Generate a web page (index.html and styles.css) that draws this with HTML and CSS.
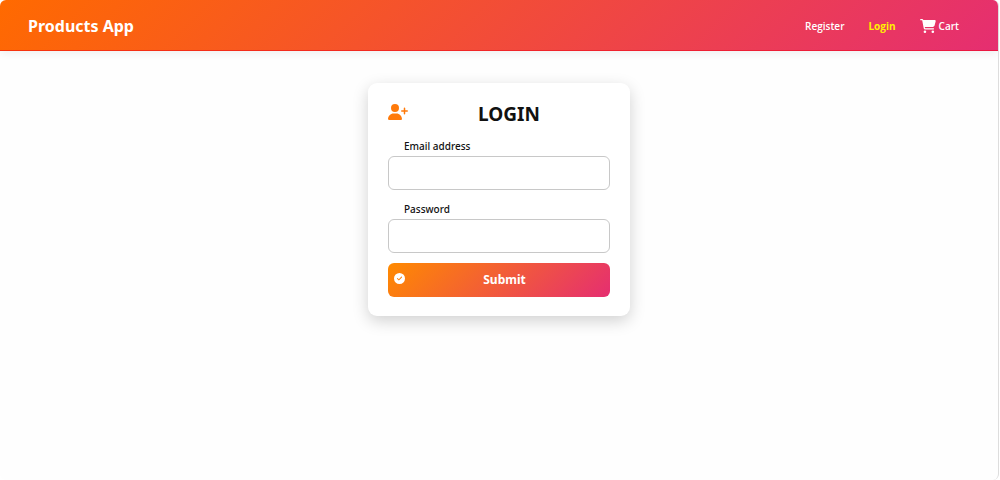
FILE: index.html
```html
<!DOCTYPE html>
<html lang="en">
<head>
<meta charset="utf-8">
<title>Products App</title>
<link rel="stylesheet" href="styles.css">
</head>
<body>
<div class="app">
  <header class="navbar">
    <a class="brand" href="#">Products App</a>
    <nav class="links">
      <a class="link" href="#">Register</a>
      <a class="link active" href="#">Login</a>
      <a class="link cart" href="#">
        <svg class="cart-icon" viewBox="0 0 576 512" aria-hidden="true"><path fill="currentColor" d="M0 24C0 10.700 10.700 0 24 0H69.500c22 0 41.500 12.800 50.600 32h411c26.300 0 45.500 25 38.600 50.400l-41 152.300c-8.500 31.400-37 53.300-69.500 53.300H170.700l5.400 28.500c2.200 11.300 12.100 19.500 23.600 19.500H488c13.300 0 24 10.700 24 24s-10.700 24-24 24H199.700c-34.600 0-64.300-24.600-70.700-58.500L77.400 54.500C76.700 50.700 73.400 48 69.500 48H24C10.700 48 0 37.300 0 24zM128 464a48 48 0 1 1 96 0 48 48 0 1 1-96 0zm336-48a48 48 0 1 1 0 96 48 48 0 1 1 0-96z"/></svg>
        Cart
      </a>
    </nav>
  </header>
  <main class="content">
    <form class="card">
      <div class="card-head">
        <svg class="user-icon" viewBox="0 0 640 512" aria-hidden="true"><path fill="currentColor" d="M96 128a128 128 0 1 1 256 0A128 128 0 1 1 96 128zM0 482.300C0 383.800 79.800 304 178.300 304h91.400C368.200 304 448 383.800 448 482.300c0 16.400-13.300 29.700-29.700 29.700H29.700C13.300 512 0 498.700 0 482.300zM504 312V248H440c-13.300 0-24-10.700-24-24s10.700-24 24-24h64V136c0-13.300 10.700-24 24-24s24 10.700 24 24v64h64c13.300 0 24 10.700 24 24s-10.700 24-24 24H552v64c0 13.300-10.700 24-24 24s-24-10.700-24-24z"/></svg>
        <h1 class="title">LOGIN</h1>
      </div>
      <div class="field">
        <label class="label" for="email">Email address</label>
        <input class="input" id="email" type="email">
      </div>
      <div class="field">
        <label class="label" for="password">Password</label>
        <input class="input" id="password" type="password">
      </div>
      <button class="submit" type="submit">
        <svg class="check-icon" viewBox="0 0 512 512" aria-hidden="true"><path fill="currentColor" d="M256 512A256 256 0 1 0 256 0a256 256 0 1 0 0 512zM369 209L241 337c-9.400 9.400-24.600 9.400-33.900 0l-64-64c-9.400-9.400-9.400-24.600 0-33.900s24.600-9.400 33.900 0l47 47L335 175c9.400-9.400 24.600-9.400 33.900 0s9.400 24.600 0 33.900z"/></svg>
        <span class="submit-text">Submit</span>
      </button>
    </form>
  </main>
</div>
</body>
</html>
```
FILE: styles.css
```css
* {
  box-sizing: border-box;
}

body {
  margin: 0;
  background: #fff;
  color: #111;
  font-family: "Noto Sans", "Open Sans", sans-serif;
}

.app {
  display: flex;
  flex-direction: column;
  min-height: 100vh;
  margin-right: 1px;
  border-right: 1px solid #ddd;
  border-radius: 6px;
  background: #fefefe;
  overflow: hidden;
}

.navbar {
  display: flex;
  align-items: center;
  justify-content: space-between;
  padding: 15px 39px 13px 28px;
  border-bottom: 1px solid rgba(240, 0, 20, 0.5);
  background: linear-gradient(135deg, #ff6a00, #e52e71) border-box;
  box-shadow: 0 3px 8px rgba(0, 0, 0, 0.06);
  color: #fff;
}

.brand {
  color: inherit;
  font-size: 16px;
  font-weight: 700;
  line-height: 22px;
  text-decoration: none;
}

.links {
  display: flex;
  align-items: center;
  gap: 24px;
}

.link {
  color: inherit;
  font-family: "Open Sans", "Noto Sans", sans-serif;
  font-size: 10px;
  font-weight: 600;
  line-height: 16px;
  text-decoration: none;
}

.active {
  color: #fff200;
  font-weight: 700;
}

.cart {
  display: flex;
  align-items: center;
  gap: 3px;
}

.cart-icon {
  width: 16px;
  height: 14px;
}

.content {
  display: flex;
  justify-content: center;
  padding: 32px 16px;
}

.card {
  width: 262px;
  padding: 20px 20px 19px;
  border-radius: 9px;
  background: #fff;
  box-shadow: 0 5px 16px rgba(0, 0, 0, 0.18);
}

.card-head {
  display: flex;
  align-items: flex-start;
  margin-bottom: 11px;
}

.user-icon {
  width: 20px;
  height: 16px;
  margin-top: 1px;
  color: #ff7a0a;
}

.title {
  flex: 1;
  margin: 0;
  padding-bottom: 2px;
  font-size: 19px;
  font-weight: 700;
  line-height: 22px;
  text-align: center;
}

.field {
  display: flex;
  flex-direction: column;
  margin-bottom: 11px;
}

.label {
  padding: 0 16px 2px;
  font-size: 10px;
  font-weight: 500;
  line-height: 16px;
}

.input {
  width: 100%;
  height: 34px;
  padding: 6px 10px;
  border: 1px solid #c8c8c8;
  border-radius: 6px;
  background: #fff;
  font: inherit;
  font-size: 12px;
}

.submit {
  display: flex;
  align-items: flex-start;
  width: 100%;
  margin-top: -1px;
  padding: 10px 6px;
  border: 0;
  border-radius: 6px;
  background: linear-gradient(135deg, #ff8a00, #e52e71);
  color: #fff;
  font: inherit;
  font-size: 12px;
  font-weight: 700;
  line-height: 14px;
}

.check-icon {
  width: 11px;
  height: 11px;
}

.submit-text {
  flex: 1;
}
```
